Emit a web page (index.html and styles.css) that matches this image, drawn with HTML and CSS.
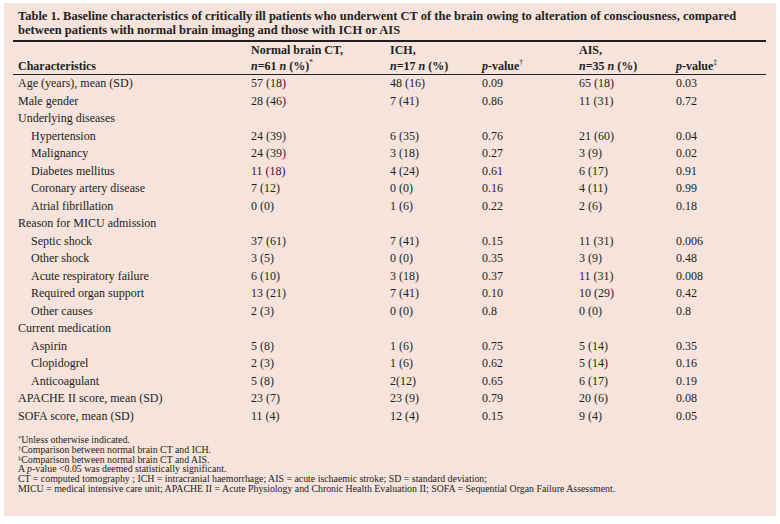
FILE: index.html
```html
<!DOCTYPE html>
<html>
<head>
<meta charset="utf-8">
<link rel="stylesheet" href="styles.css">
</head>
<body>
<div class="panel">
  <div class="title">Table 1. Baseline characteristics of critically ill patients who underwent CT of the brain owing to alteration of consciousness, compared between patients with normal brain imaging and those with ICH or AIS</div>
  <table class="data">
    <colgroup>
      <col class="c1"><col class="c2"><col class="c3"><col class="c4"><col class="c5"><col class="c6">
    </colgroup>
    <thead>
      <tr>
        <th class="lbl"><br>Characteristics</th>
        <th>Normal brain CT,<br><i>n</i>=61 <i>n</i> (%)<sup>*</sup></th>
        <th>ICH,<br><i>n</i>=17 <i>n</i> (%)</th>
        <th><br><i>p</i>-value<sup>†</sup></th>
        <th>AIS,<br><i>n</i>=35 <i>n</i> (%)</th>
        <th><br><i>p</i>-value<sup>‡</sup></th>
      </tr>
    </thead>
    <tbody>
      <tr><td class="lbl">Age (years), mean (SD)</td><td>57 (18)</td><td>48 (16)</td><td>0.09</td><td>65 (18)</td><td>0.03</td></tr>
      <tr><td class="lbl">Male gender</td><td>28 (46)</td><td>7 (41)</td><td>0.86</td><td>11 (31)</td><td>0.72</td></tr>
      <tr><td class="lbl">Underlying diseases</td><td></td><td></td><td></td><td></td><td></td></tr>
      <tr><td class="lbl sub">Hypertension</td><td>24 (39)</td><td>6 (35)</td><td>0.76</td><td>21 (60)</td><td>0.04</td></tr>
      <tr><td class="lbl sub">Malignancy</td><td>24 (39)</td><td>3 (18)</td><td>0.27</td><td>3 (9)</td><td>0.02</td></tr>
      <tr><td class="lbl sub">Diabetes mellitus</td><td>11 (18)</td><td>4 (24)</td><td>0.61</td><td>6 (17)</td><td>0.91</td></tr>
      <tr><td class="lbl sub">Coronary artery disease</td><td>7 (12)</td><td>0 (0)</td><td>0.16</td><td>4 (11)</td><td>0.99</td></tr>
      <tr><td class="lbl sub">Atrial fibrillation</td><td>0 (0)</td><td>1 (6)</td><td>0.22</td><td>2 (6)</td><td>0.18</td></tr>
      <tr><td class="lbl">Reason for MICU admission</td><td></td><td></td><td></td><td></td><td></td></tr>
      <tr><td class="lbl sub">Septic shock</td><td>37 (61)</td><td>7 (41)</td><td>0.15</td><td>11 (31)</td><td>0.006</td></tr>
      <tr><td class="lbl sub">Other shock</td><td>3 (5)</td><td>0 (0)</td><td>0.35</td><td>3 (9)</td><td>0.48</td></tr>
      <tr><td class="lbl sub">Acute respiratory failure</td><td>6 (10)</td><td>3 (18)</td><td>0.37</td><td>11 (31)</td><td>0.008</td></tr>
      <tr><td class="lbl sub">Required organ support</td><td>13 (21)</td><td>7 (41)</td><td>0.10</td><td>10 (29)</td><td>0.42</td></tr>
      <tr><td class="lbl sub">Other causes</td><td>2 (3)</td><td>0 (0)</td><td>0.8</td><td>0 (0)</td><td>0.8</td></tr>
      <tr><td class="lbl">Current medication</td><td></td><td></td><td></td><td></td><td></td></tr>
      <tr><td class="lbl sub">Aspirin</td><td>5 (8)</td><td>1 (6)</td><td>0.75</td><td>5 (14)</td><td>0.35</td></tr>
      <tr><td class="lbl sub">Clopidogrel</td><td>2 (3)</td><td>1 (6)</td><td>0.62</td><td>5 (14)</td><td>0.16</td></tr>
      <tr><td class="lbl sub">Anticoagulant</td><td>5 (8)</td><td>2(12)</td><td>0.65</td><td>6 (17)</td><td>0.19</td></tr>
      <tr><td class="lbl">APACHE II score, mean (SD)</td><td>23 (7)</td><td>23 (9)</td><td>0.79</td><td>20 (6)</td><td>0.08</td></tr>
      <tr><td class="lbl">SOFA score, mean (SD)</td><td>11 (4)</td><td>12 (4)</td><td>0.15</td><td>9 (4)</td><td>0.05</td></tr>
    </tbody>
  </table>
  <div class="notes">
    <div><sup>*</sup>Unless otherwise indicated.</div>
    <div><sup>†</sup>Comparison between normal brain CT and ICH.</div>
    <div><sup>‡</sup>Comparison between normal brain CT and AIS.</div>
    <div>A <i>p</i>-value &lt;0.05 was deemed statistically significant.</div>
    <div>CT = computed tomography ; ICH = intracranial haemorrhage; AIS = acute ischaemic stroke; SD = standard deviation;</div>
    <div>MICU = medical intensive care unit; APACHE II = Acute Physiology and Chronic Health Evaluation II; SOFA = Sequential Organ Failure Assessment.</div>
  </div>
</div>
</body>
</html>
```
FILE: styles.css
```css
html, body {
  margin: 0;
  padding: 0;
  background: #ffffff;
}
body {
  font-family: "Liberation Serif", "Times New Roman", serif;
  color: #231f20;
}
.panel {
  margin: 3px 0 0 4px;
  width: 772px;
  height: 513px;
  background: #f5e3dc;
  box-sizing: border-box;
  padding: 6px 0 0 9px;
}
.title {
  font-weight: bold;
  font-size: 12.5px;
  line-height: 14px;
  padding-left: 5px;
  padding-right: 18px;
  margin-bottom: 3px;
}
.data {
  width: 753px;
  table-layout: fixed;
  border-collapse: collapse;
  border-top: 2px solid #231f20;
  font-size: 12px;
}
.c1 { width: 238px; }
.c2 { width: 139px; }
.c3 { width: 92px; }
.c4 { width: 97px; }
.c5 { width: 97px; }
.c6 { width: 90px; }
.data th {
  font-weight: bold;
  text-align: left;
  vertical-align: bottom;
  line-height: 16px;
  padding: 0;
  border-bottom: 1px solid #231f20;
  white-space: nowrap;
}
.data td {
  padding: 0;
  height: 17.5px;
  line-height: 17.5px;
  white-space: nowrap;
}
.data .lbl {
  padding-left: 5px;
}
.data .lbl.sub {
  padding-left: 18px;
}
.data sup {
  font-size: 7.5px;
  line-height: 0;
  vertical-align: 5px;
  font-weight: normal;
}
.notes {
  margin-top: 10px;
  padding-left: 5px;
  font-size: 9.85px;
  line-height: 9.8px;
}
.notes sup {
  font-size: 6.5px;
  line-height: 0;
  vertical-align: 3px;
}
```
